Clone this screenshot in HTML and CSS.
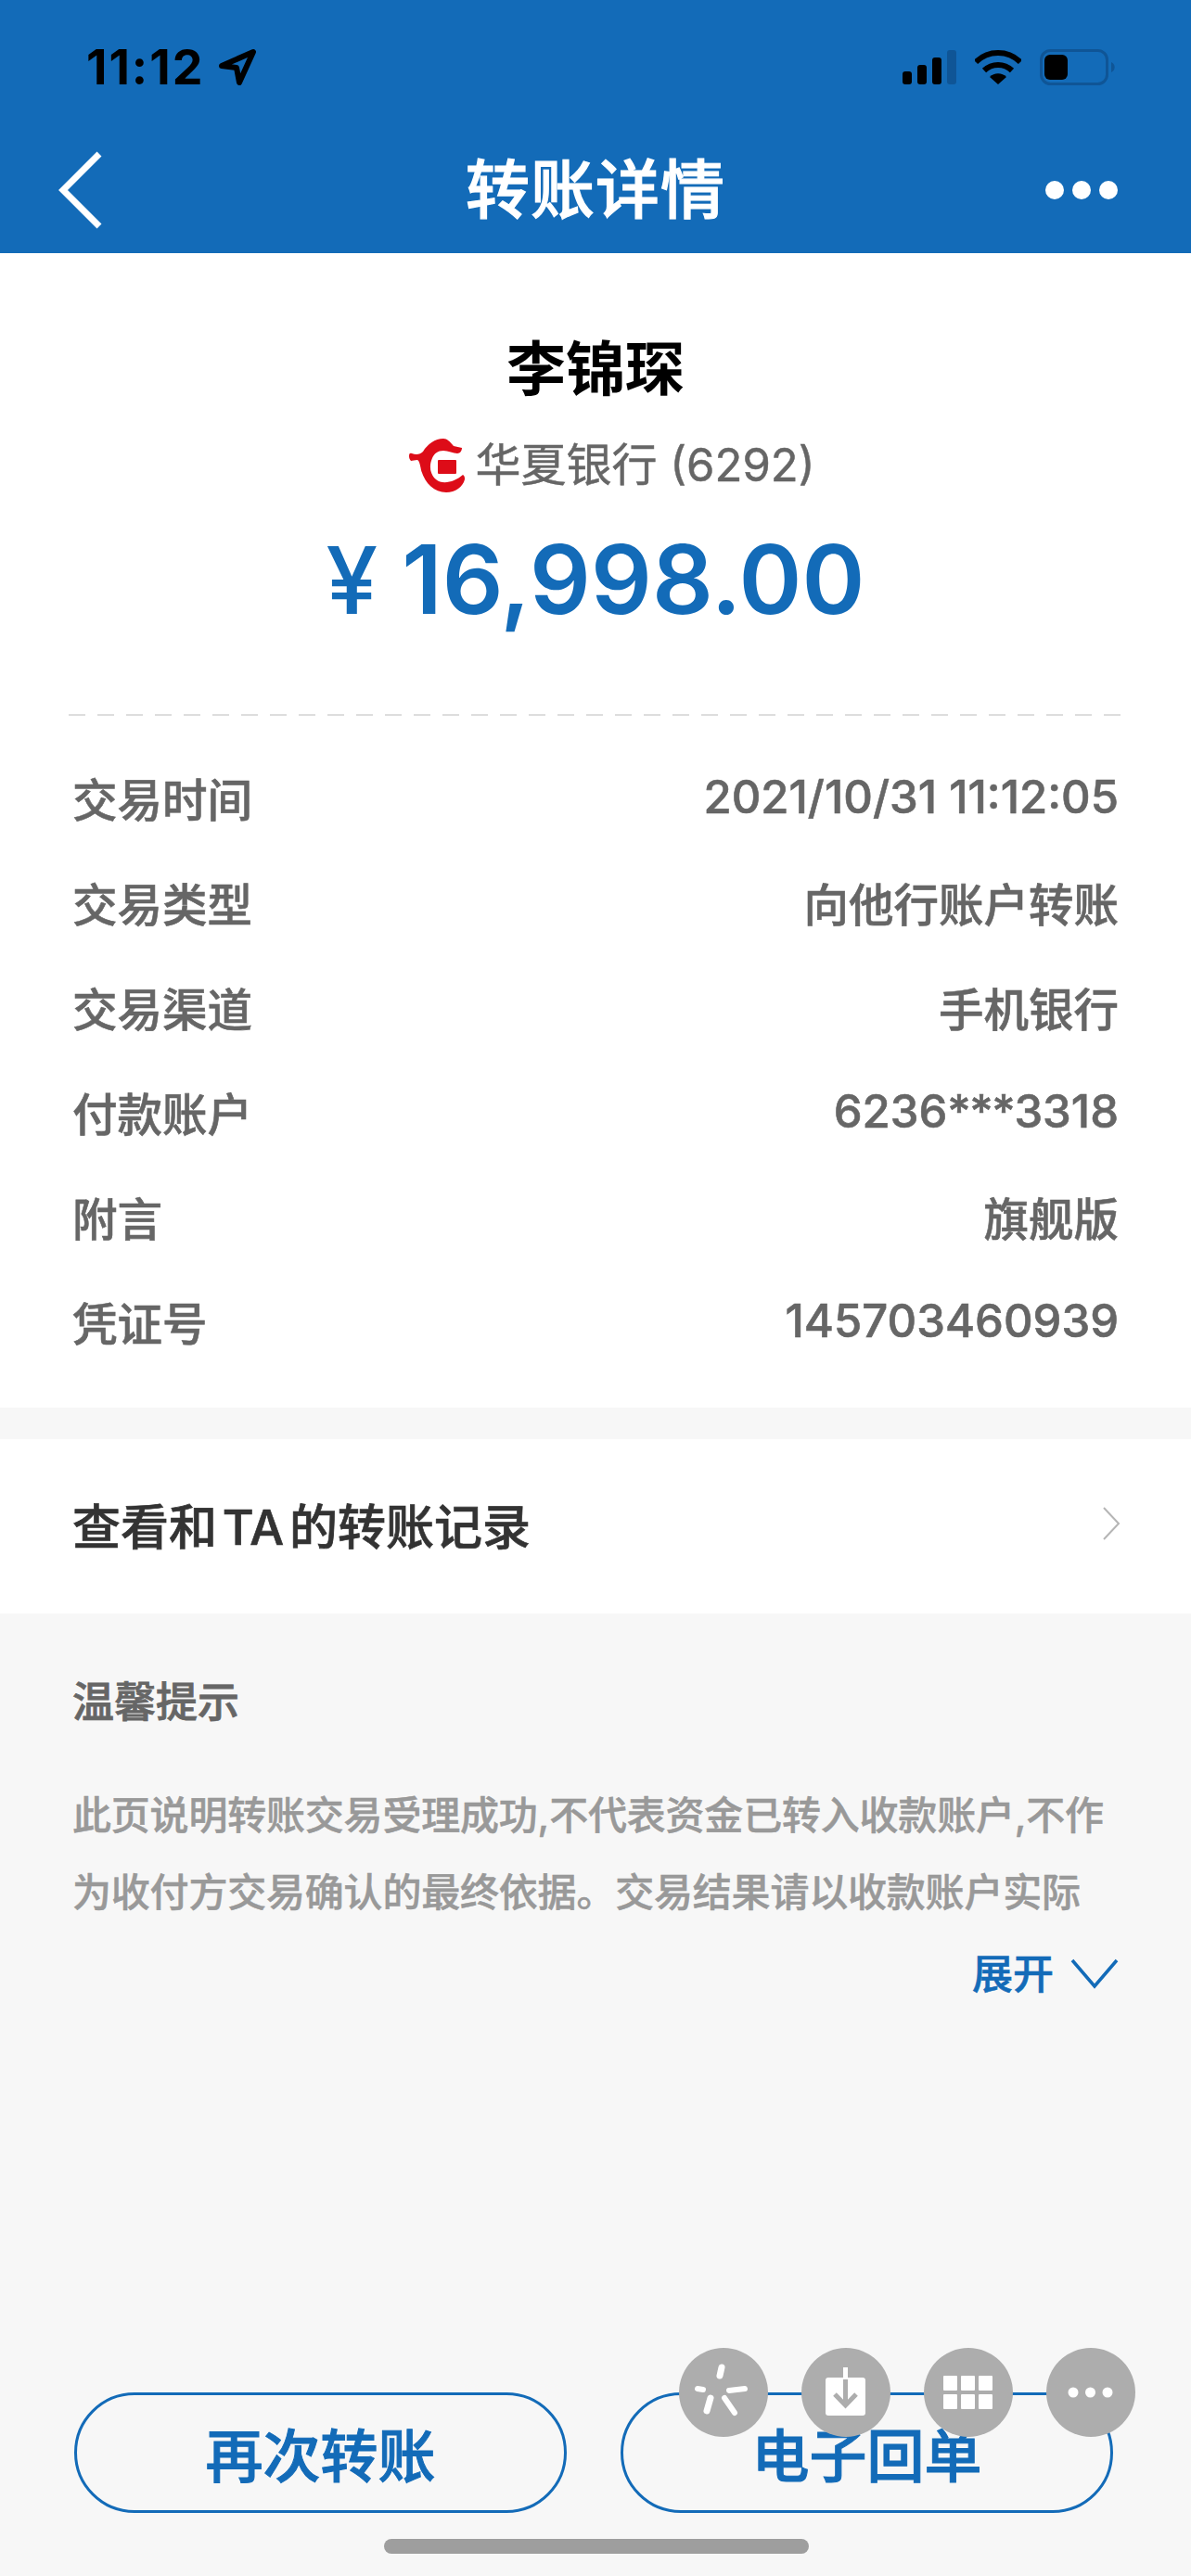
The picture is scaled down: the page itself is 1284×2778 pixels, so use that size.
FILE: index.html
```html
<!DOCTYPE html>
<html lang="zh-CN">
<head>
    <meta charset="UTF-8">
    <meta name="viewport" content="width=device-width, initial-scale=1.0">
    <title>转账详情</title>
    <link rel="stylesheet" href="styles.css">
</head>
<body>
    <div class="page">
        <header class="top">
            <div class="status">
                <div class="status-left">
                    <span class="clock">11:12</span>
                    <svg class="loc" viewBox="0 0 42 41"><path d="M4 19 L38 4 L23 37 L20 21 Z" fill="none" stroke="#000" stroke-width="6" stroke-linejoin="round"/></svg>
                </div>
                <div class="status-right">
                    <svg class="signal" viewBox="0 0 58 37">
                        <rect x="0" y="23" width="10" height="14" rx="3" fill="#000"/>
                        <rect x="16" y="16" width="10" height="21" rx="3" fill="#000"/>
                        <rect x="32" y="8" width="10" height="29" rx="3" fill="#000"/>
                        <rect x="48" y="0" width="10" height="37" rx="3" fill="#0f5596"/>
                    </svg>
                    <svg class="wifi" viewBox="0 0 50 37">
                        <path d="M1 13 A34 34 0 0 1 49 13" fill="none" stroke="#000" stroke-width="6"/>
                        <path d="M10 22 A21.5 21.5 0 0 1 40 22" fill="none" stroke="#000" stroke-width="6"/>
                        <path d="M16 29 A12.7 12.7 0 0 1 34 29 L25 37 Z" fill="#000"/>
                    </svg>
                    <svg class="battery" viewBox="0 0 81 39">
                        <rect x="1.5" y="1.5" width="71" height="36" rx="10" fill="none" stroke="#0f5596" stroke-width="3"/>
                        <rect x="5" y="6" width="25" height="27" rx="6" fill="#000"/>
                        <path d="M77 14 A6 6 0 0 1 77 25 Z" fill="#0f5596"/>
                    </svg>
                </div>
            </div>
            <nav class="navbar">
                <svg class="back" viewBox="0 0 50 84"><path d="M47 3 L8 42 L47 81" fill="none" stroke="#fff" stroke-width="7"/></svg>
                <h1 class="nav-title">转账详情</h1>
                <div class="more"><i></i><i></i><i></i></div>
            </nav>
        </header>

        <section class="summary">
            <div class="payee">李锦琛</div>
            <div class="bank">
                <svg class="bank-logo" viewBox="0 0 60 58">
                    <path d="M0 19 C0 16 1 15 3 16 C8 18 12 17 15 14 C20 6 28 0 37 0 C41 0 44 3 48 8 L57 10 C57 13 55 16 52 16 C48 16 42 13 37 13 C31 13 27 16 25 21 C21 30 23 39 29 44 C36 50 49 47 58 39 C60 40 60 42 60 44 C58 52 50 58 40 58 C27 58 17 48 13 34 C12 28 11 24 9 23 C6 23 4 24 2 24 C1 23 0 21 0 19 Z" fill="#dd0c18"/>
                    <rect x="31" y="23" width="20" height="15" rx="1" fill="#dd0c18"/>
                </svg>
                <span>华夏银行 (6292)</span>
            </div>
            <div class="amount"><span class="yen">¥</span> 16,998.00</div>
        </section>

        <section class="details">
            <div class="row"><span>交易时间</span><span class="num">2021/10/31 11:12:05</span></div>
            <div class="row"><span>交易类型</span><span>向他行账户转账</span></div>
            <div class="row"><span>交易渠道</span><span>手机银行</span></div>
            <div class="row"><span>付款账户</span><span class="num">6236<span class="stars">***</span>3318</span></div>
            <div class="row"><span>附言</span><span>旗舰版</span></div>
            <div class="row"><span>凭证号</span><span class="num">145703460939</span></div>
        </section>

        <section class="records">
            <span>查看和 TA 的转账记录</span>
            <svg class="arrow" viewBox="0 0 20 36"><path d="M2 1 L18 18 L2 35" fill="none" stroke="#b5b5b5" stroke-width="2"/></svg>
        </section>

        <section class="tips">
            <h2 class="tips-title">温馨提示</h2>
            <p class="tips-text">此页说明转账交易受理成功,不代表资金已转入收款账户,不作<br>为收付方交易确认的最终依据。交易结果请以收款账户实际</p>
            <div class="expand">
                <span>展开</span>
                <svg class="expand-icon" viewBox="0 0 52 34"><path d="M2 2 L26 30 L50 2" fill="none" stroke="#136bb8" stroke-width="3.5"/></svg>
            </div>
        </section>

        <div class="actions">
            <button class="btn">再次转账</button>
            <button class="btn">电子回单</button>
        </div>
        <div class="home-bar"></div>

        <div class="float-tools">
            <div class="tool">
                <svg viewBox="0 0 96 96" fill="none" stroke="#fff" stroke-linecap="round">
                    <path d="M44 30 L46 21" stroke-width="7"/><path d="M26 45 L20 44" stroke-width="6"/><path d="M54 46 L71 44" stroke-width="6"/><path d="M34 54 L30 68" stroke-width="7"/><path d="M49 54 L60 70" stroke-width="6"/>
                </svg>
            </div>
            <div class="tool">
                <svg viewBox="0 0 96 96">
                    <rect x="26" y="32" width="43" height="41" rx="3" fill="#fff"/>
                    <rect x="45" y="21" width="5" height="14" fill="#fff"/>
                    <path d="M47.5 34 V60 M36 50 L47.5 62 L59 50" fill="none" stroke="#adadad" stroke-width="5"/>
                </svg>
            </div>
            <div class="tool">
                <svg viewBox="0 0 96 96" fill="#fff">
                    <rect x="21" y="30" width="15" height="16" rx="1"/><rect x="40" y="30" width="15" height="16" rx="1"/><rect x="59" y="30" width="15" height="16" rx="1"/>
                    <rect x="21" y="50" width="15" height="16" rx="1"/><rect x="40" y="50" width="15" height="16" rx="1"/><rect x="59" y="50" width="15" height="16" rx="1"/>
                </svg>
            </div>
            <div class="tool">
                <svg viewBox="0 0 96 96" fill="#fff">
                    <circle cx="29" cy="48" r="5.5"/><circle cx="47.5" cy="48" r="5.5"/><circle cx="66" cy="48" r="5.5"/>
                </svg>
            </div>
        </div>
    </div>
</body>
</html>
```

FILE: styles.css
```css
* {
    box-sizing: border-box;
}

html, body {
    margin: 0;
    padding: 0;
}

body {
    font-family: "Inter", "Noto Sans CJK SC", sans-serif;
    background-color: #f7f7f7;
}

.page {
    position: relative;
    width: 1284px;
    height: 2778px;
    overflow: hidden;
}

.top {
    height: 273px;
    background-color: #136bb8;
    padding-top: 42px;
}

.status {
    height: 60px;
    display: flex;
    justify-content: space-between;
    align-items: center;
    padding: 0 82px 0 93px;
}

.status-left, .status-right {
    display: flex;
    align-items: center;
}

.clock {
    font-size: 52px;
    font-weight: 700;
    letter-spacing: 2px;
    color: #000;
}

.loc {
    width: 42px;
    height: 41px;
    margin-left: 15px;
}

.signal {
    width: 58px;
    height: 37px;
}

.wifi {
    width: 50px;
    height: 37px;
    margin-left: 20px;
}

.battery {
    width: 81px;
    height: 39px;
    margin-left: 20px;
}

.navbar {
    height: 171px;
    display: grid;
    grid-template-columns: 1fr auto 1fr;
    align-items: center;
    padding: 34px 60px 0;
}

.back {
    width: 50px;
    height: 84px;
}

.nav-title {
    margin: 0 0 10px;
    font-size: 69px;
    font-weight: 500;
    color: #fff;
    letter-spacing: 1px;
    font-family: "Noto Sans CJK SC", sans-serif;
    -webkit-text-stroke: 1.2px #fff;
}

.more {
    justify-self: end;
    display: flex;
    gap: 9px;
    margin-right: 19px;
}

.more i {
    width: 20px;
    height: 20px;
    border-radius: 50%;
    background-color: #fff;
}

.summary {
    background-color: #fff;
    height: 497px;
    padding-top: 80px;
    display: flex;
    flex-direction: column;
    align-items: center;
}

.payee {
    font-size: 64px;
    line-height: 90px;
    font-weight: 700;
    color: #000;
}

.bank {
    display: flex;
    align-items: center;
    margin-top: 29px;
    padding-left: 36px;
    font-size: 49px;
    line-height: 60px;
    color: #666;
    -webkit-text-stroke: 0.5px #666;
}

.bank-logo {
    width: 60px;
    height: 58px;
    margin-right: 11px;
}

.amount {
    margin-top: 33px;
    font-size: 103px;
    line-height: 120px;
    font-weight: 600;
    color: #136bb8;
}

.yen {
    font-size: 100px;
    font-weight: 500;
}

.details {
    background-color: #fff;
    height: 748px;
    padding: 33px 78px 0;
    position: relative;
}

.details::before {
    content: "";
    position: absolute;
    left: 74px;
    right: 74px;
    top: 0;
    height: 2px;
    background: repeating-linear-gradient(to right, #ddd 0, #ddd 18px, transparent 18px, transparent 31px);
}

.row {
    display: flex;
    justify-content: space-between;
    align-items: center;
    height: 113px;
    font-size: 48.5px;
    font-weight: 500;
    color: #666;
    -webkit-text-stroke: 0.6px #666;
}

.num {
    font-size: 49px;
}

.stars {
    letter-spacing: -1.5px;
}

.records {
    margin-top: 34px;
    height: 188px;
    background-color: #fff;
    display: flex;
    justify-content: space-between;
    align-items: center;
    padding: 0 76px 6px 78px;
    font-size: 52px;
    font-weight: 500;
    word-spacing: -8px;
    color: #333;
    -webkit-text-stroke: 0.7px #333;
}

.arrow {
    width: 20px;
    height: 36px;
}

.tips {
    padding: 65px 78px 0;
}

.tips-title {
    margin: 0;
    font-size: 45px;
    line-height: 62px;
    font-weight: 500;
    color: #666;
    -webkit-text-stroke: 0.8px #666;
}

.tips-text {
    margin: 49px 0 0;
    font-size: 42px;
    font-weight: 500;
    line-height: 83px;
    letter-spacing: -0.2px;
    color: #999;
    white-space: nowrap;
    -webkit-text-stroke: 0.5px #999;
}

.expand {
    display: flex;
    justify-content: flex-end;
    align-items: center;
    margin-top: 16px;
    font-size: 44px;
    font-weight: 500;
    line-height: 62px;
    color: #136bb8;
    -webkit-text-stroke: 0.6px #136bb8;
}

.expand-icon {
    width: 52px;
    height: 34px;
    margin-left: 18px;
}

.actions {
    position: absolute;
    left: 80px;
    right: 84px;
    top: 2580px;
    display: flex;
    justify-content: space-between;
}

.btn {
    width: 531px;
    height: 130px;
    background: transparent;
    border: 3px solid #136bb8;
    border-radius: 65px;
    font-family: "Noto Sans CJK SC", sans-serif;
    font-size: 62px;
    font-weight: 500;
    color: #136bb8;
    padding: 0;
    -webkit-text-stroke: 1px #136bb8;
}

.home-bar {
    position: absolute;
    left: 414px;
    top: 2738px;
    width: 458px;
    height: 16px;
    border-radius: 8px;
    background-color: #9e9e9e;
}

.float-tools {
    position: absolute;
    left: 732px;
    top: 2532px;
    display: flex;
    gap: 36px;
}

.tool {
    width: 96px;
    height: 96px;
    border-radius: 50%;
    background-color: #adadad;
}

.tool svg {
    display: block;
    width: 96px;
    height: 96px;
}
```
